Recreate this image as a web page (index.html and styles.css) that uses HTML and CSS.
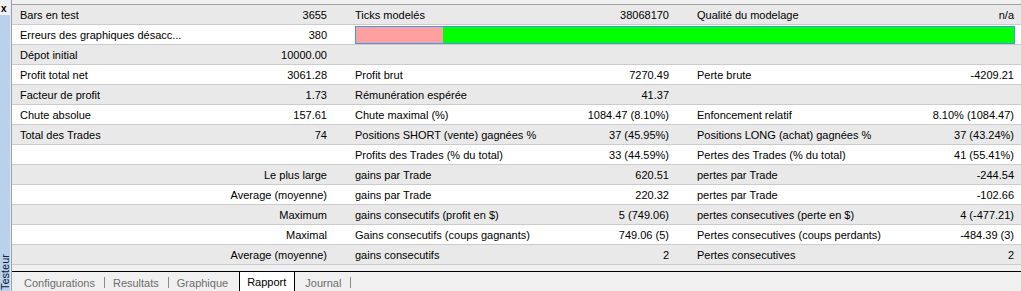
FILE: index.html
```html
<!DOCTYPE html>
<html lang="fr">
<head>
<meta charset="utf-8">
<title>Testeur - Rapport</title>
<link rel="stylesheet" href="styles.css">
</head>
<body>
<div class="app">
  <aside class="side">
    <div class="close">x</div>
    <div class="side-body"><span class="side-label">Testeur</span></div>
  </aside>
  <main class="panel">
    <div class="topgap"></div>
    <div class="table">
      <div class="row alt">
        <div class="cell"><span>Bars en test</span><span>3655</span></div>
        <div class="cell"><span>Ticks modelés</span><span>38068170</span></div>
        <div class="cell"><span>Qualité du modelage</span><span>n/a</span></div>
      </div>
      <div class="row">
        <div class="cell"><span>Erreurs des graphiques désacc...</span><span>380</span></div>
        <div class="bar"><div class="bar-err" style="width:87px"></div><div class="bar-ok"></div></div>
      </div>
      <div class="row alt">
        <div class="cell"><span>Dépot initial</span><span>10000.00</span></div>
        <div class="cell"></div>
        <div class="cell"></div>
      </div>
      <div class="row">
        <div class="cell"><span>Profit total net</span><span>3061.28</span></div>
        <div class="cell"><span>Profit brut</span><span>7270.49</span></div>
        <div class="cell"><span>Perte brute</span><span>-4209.21</span></div>
      </div>
      <div class="row alt">
        <div class="cell"><span>Facteur de profit</span><span>1.73</span></div>
        <div class="cell"><span>Rémunération espérée</span><span>41.37</span></div>
        <div class="cell"></div>
      </div>
      <div class="row">
        <div class="cell"><span>Chute absolue</span><span>157.61</span></div>
        <div class="cell"><span>Chute maximal (%)</span><span>1084.47 (8.10%)</span></div>
        <div class="cell"><span>Enfoncement relatif</span><span>8.10% (1084.47)</span></div>
      </div>
      <div class="row alt">
        <div class="cell"><span>Total des Trades</span><span>74</span></div>
        <div class="cell"><span>Positions SHORT (vente) gagnées %</span><span>37 (45.95%)</span></div>
        <div class="cell"><span>Positions LONG (achat) gagnées %</span><span>37 (43.24%)</span></div>
      </div>
      <div class="row">
        <div class="cell"></div>
        <div class="cell"><span>Profits des Trades (% du total)</span><span>33 (44.59%)</span></div>
        <div class="cell"><span>Pertes des Trades (% du total)</span><span>41 (55.41%)</span></div>
      </div>
      <div class="row alt">
        <div class="cell"><span></span><span>Le plus large</span></div>
        <div class="cell"><span>gains par Trade</span><span>620.51</span></div>
        <div class="cell"><span>pertes par Trade</span><span>-244.54</span></div>
      </div>
      <div class="row">
        <div class="cell"><span></span><span>Average (moyenne)</span></div>
        <div class="cell"><span>gains par Trade</span><span>220.32</span></div>
        <div class="cell"><span>pertes par Trade</span><span>-102.66</span></div>
      </div>
      <div class="row alt">
        <div class="cell"><span></span><span>Maximum</span></div>
        <div class="cell"><span>gains consecutifs (profit en $)</span><span>5 (749.06)</span></div>
        <div class="cell"><span>pertes consecutives (perte en $)</span><span>4 (-477.21)</span></div>
      </div>
      <div class="row">
        <div class="cell"><span></span><span>Maximal</span></div>
        <div class="cell"><span>Gains consecutifs (coups gagnants)</span><span>749.06 (5)</span></div>
        <div class="cell"><span>Pertes consecutives (coups perdants)</span><span>-484.39 (3)</span></div>
      </div>
      <div class="row alt">
        <div class="cell"><span></span><span>Average (moyenne)</span></div>
        <div class="cell"><span>gains consecutifs</span><span>2</span></div>
        <div class="cell"><span>Pertes consecutives</span><span>2</span></div>
      </div>
    </div>
    <div class="filler"></div>
    <nav class="tabs">
      <span class="tab">Configurations</span><span class="sep"></span>
      <span class="tab">Resultats</span><span class="sep"></span>
      <span class="tab">Graphique</span>
      <span class="tab active">Rapport</span>
      <span class="tab journal">Journal</span><span class="sep"></span>
    </nav>
  </main>
</div>
</body>
</html>
```

FILE: styles.css
```css
* { box-sizing: border-box; }

html, body {
  margin: 0;
  padding: 0;
  background: #f0f0f0;
}

body {
  font-family: "Liberation Sans", Arial, sans-serif;
  font-size: 11px;
  color: #000;
}

.app {
  display: flex;
  width: 1021px;
  height: 291px;
  overflow: hidden;
}

.side {
  width: 11px;
  flex: 0 0 11px;
  display: flex;
  flex-direction: column;
  border-right: 1px solid #e2ecf8;
}

.close {
  height: 15px;
  background: #f0f0f0;
  font-weight: bold;
  font-size: 10px;
  line-height: 14px;
  padding: 2px 0 0 1px;
}

.side-body {
  flex: 1;
  background: #b9d1ea;
  display: flex;
  flex-direction: column;
  justify-content: flex-end;
  overflow: hidden;
}

.side-label {
  writing-mode: vertical-rl;
  transform: rotate(180deg);
  font-size: 11px;
  line-height: 10px;
  color: #10203a;
  margin-bottom: 1px;
  white-space: nowrap;
}

.panel {
  flex: 1;
  display: flex;
  flex-direction: column;
  border-left: 1px solid #a0a0a0;
  min-width: 0;
}

.topgap {
  height: 5px;
  flex: 0 0 5px;
  border-bottom: 1px solid #a0a0a0;
}

.row {
  display: grid;
  grid-template-columns: 307px 314px 317px;
  column-gap: 28px;
  padding: 0 7px 0 8px;
  height: 20px;
  line-height: 19px;
  border-bottom: 1px solid #cbcbcb;
  background: #fff;
  white-space: nowrap;
}

.row.alt {
  background: #e9e9e9;
}

.cell {
  display: flex;
  justify-content: space-between;
  padding-top: 1px;
}

.bar {
  grid-column: 2 / 4;
  display: flex;
  margin: 1px -1px 1px 0;
  border: 1px solid #3a9bf3;
}

.bar-err {
  background: #ffa0a0;
}

.bar-ok {
  flex: 1;
  background: #00ff00;
}

.filler {
  height: 6px;
  flex: 0 0 6px;
}

.tabs {
  flex: 1;
  display: flex;
  align-items: stretch;
  border-top: 1px solid #000;
  padding-left: 4px;
  color: #6d6d6d;
  font-size: 11px;
  white-space: nowrap;
}

.tab {
  padding: 5px 9px 0 8px;
}

.sep {
  width: 1px;
  height: 11px;
  margin: 5px 0 0 0;
  background: #8a8a8a;
}

.tab.active {
  margin-left: 2px;
  padding: 4px 8px 0 7px;
  background: #fff;
  color: #000;
  border-left: 1px solid #000;
  border-right: 1px solid #000;
}

.tab.journal {
  margin-left: 2px;
}
```
